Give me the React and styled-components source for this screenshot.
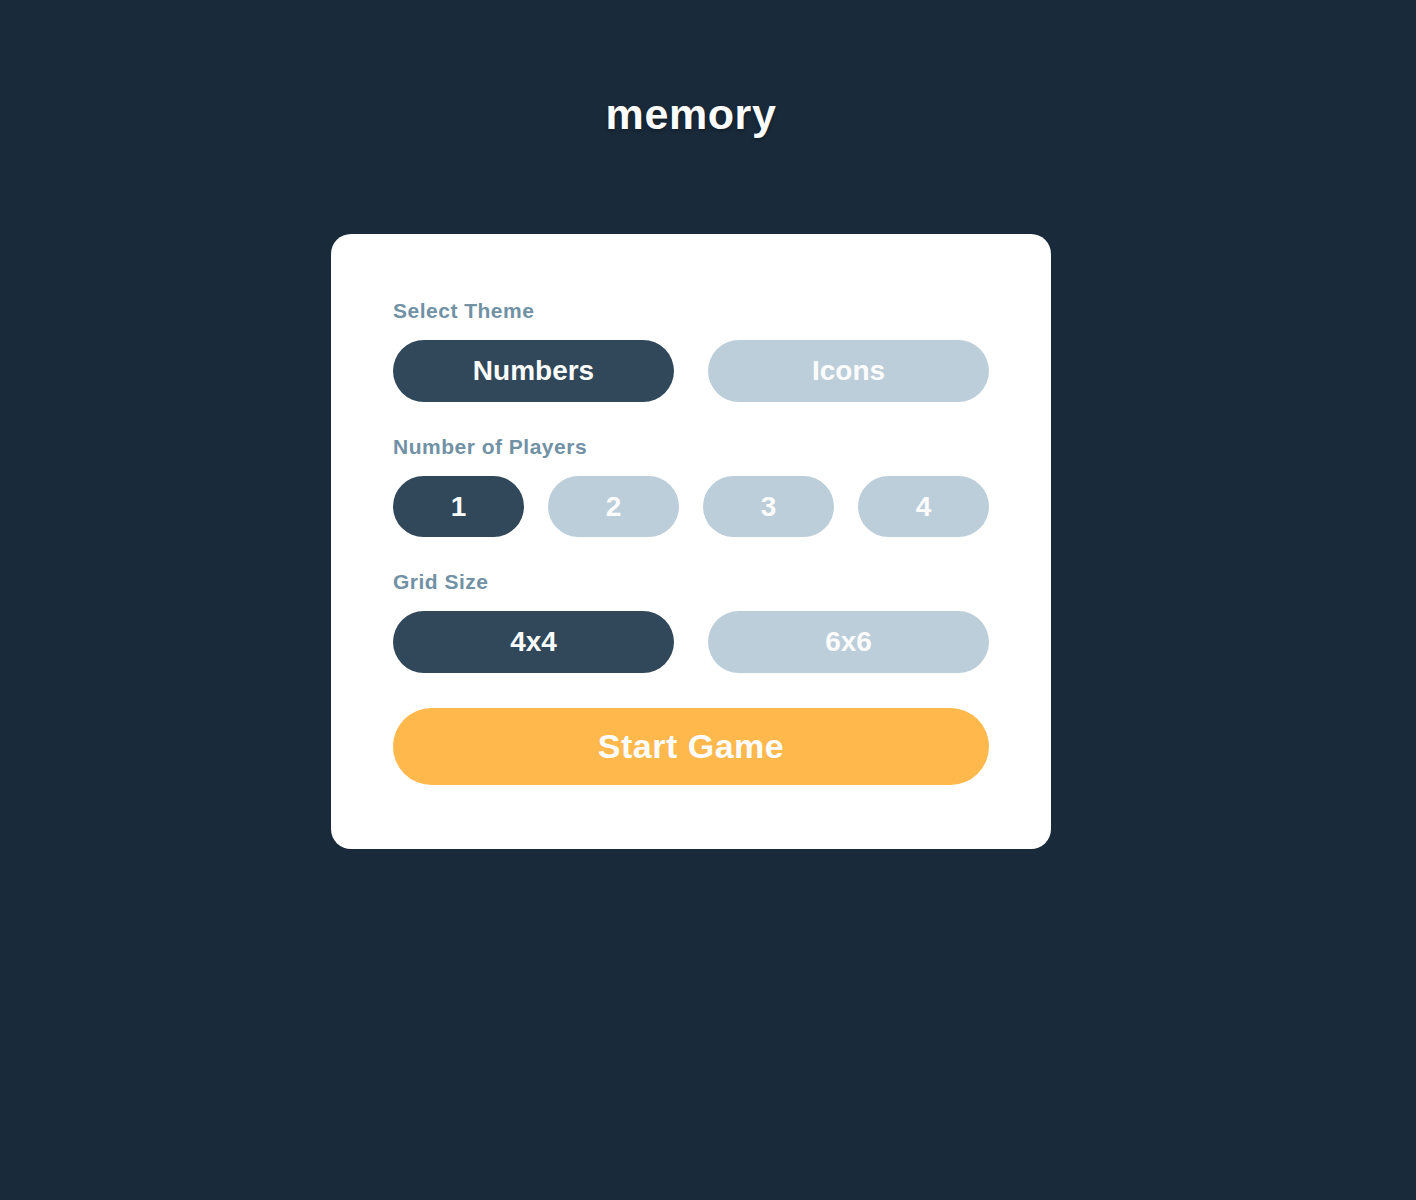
import React, { useState } from "react";
import styled, { createGlobalStyle } from "styled-components";

const GlobalStyle = createGlobalStyle`
  * { box-sizing: border-box; }
  html, body { margin: 0; padding: 0; background: #192a3a; }
  body { font-family: "Liberation Sans", Arial, sans-serif; }
`;

const Page = styled.div`
  min-height: 1200px;
  background: #192a3a;
  display: flex;
  flex-direction: column;
  align-items: center;
  padding-top: 88px;
  padding-right: 34px;
`;

const Title = styled.h1`
  margin: 0;
  height: 146px;
  font-size: 43px;
  line-height: 52px;
  font-weight: 700;
  letter-spacing: 0.6px;
  color: #fcfcfc;
  text-align: center;
  text-shadow: 0 2px 4px rgba(0, 0, 0, 0.3);
`;

const Card = styled.div`
  width: 720px;
  background: #ffffff;
  border-radius: 20px;
  padding: 65px 62px 64px;
  display: flex;
  flex-direction: column;
  gap: 33px;
`;

const Section = styled.div`
  display: flex;
  flex-direction: column;
  gap: 17px;
`;

const Label = styled.div`
  font-size: 21px;
  line-height: 24px;
  font-weight: 700;
  color: #7191a5;
  letter-spacing: 0.5px;
`;

const Row = styled.div`
  display: grid;
  grid-template-columns: repeat(${(p) => p.$cols}, 1fr);
  column-gap: ${(p) => p.$gap}px;
`;

const Option = styled.button`
  border: none;
  height: ${(p) => p.$h}px;
  border-radius: 999px;
  background: ${(p) => (p.$active ? "#304859" : "#bcced9")};
  color: #fcfcfc;
  font-family: "Liberation Sans", Arial, sans-serif;
  font-size: 28px;
  font-weight: 700;
  cursor: pointer;
  padding: 0;
`;

const StartButton = styled.button`
  margin-top: 2px;
  border: none;
  height: 77px;
  border-radius: 999px;
  background: #feb84c;
  color: #fcfcfc;
  font-family: "Liberation Sans", Arial, sans-serif;
  font-size: 34px;
  font-weight: 700;
  letter-spacing: 0.5px;
  cursor: pointer;
`;

export default function App() {
  const [theme, setTheme] = useState("Numbers");
  const [players, setPlayers] = useState(1);
  const [grid, setGrid] = useState("4x4");

  return (
    <>
      <GlobalStyle />
      <Page>
        <Title>memory</Title>
        <Card>
          <Section>
            <Label>Select Theme</Label>
            <Row $cols={2} $gap={34}>
              {["Numbers", "Icons"].map((t) => (
                <Option key={t} $h={62} $active={theme === t} onClick={() => setTheme(t)}>
                  {t}
                </Option>
              ))}
            </Row>
          </Section>
          <Section>
            <Label>Number of Players</Label>
            <Row $cols={4} $gap={24}>
              {[1, 2, 3, 4].map((n) => (
                <Option key={n} $h={61} $active={players === n} onClick={() => setPlayers(n)}>
                  {n}
                </Option>
              ))}
            </Row>
          </Section>
          <Section>
            <Label>Grid Size</Label>
            <Row $cols={2} $gap={34}>
              {["4x4", "6x6"].map((g) => (
                <Option key={g} $h={62} $active={grid === g} onClick={() => setGrid(g)}>
                  {g}
                </Option>
              ))}
            </Row>
          </Section>
          <StartButton>Start Game</StartButton>
        </Card>
      </Page>
    </>
  );
}
